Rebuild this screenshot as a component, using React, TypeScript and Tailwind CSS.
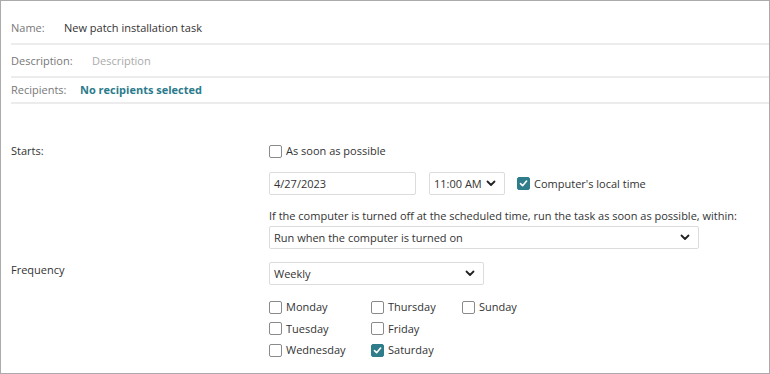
import { useState } from "react";

const teal = "bg-[#2f7d8a] border-[#2f7d8a]";

function Chevron() {
  return (
    <svg width="10" height="7" viewBox="0 0 10 7" className="shrink-0">
      <path d="M1.5 1.5 L5 5 L8.5 1.5" fill="none" stroke="#222" strokeWidth="1.8" strokeLinecap="round" strokeLinejoin="round" />
    </svg>
  );
}

function Box({ checked }: { checked: boolean }) {
  return (
    <span
      className={`flex h-[13px] w-[13px] shrink-0 items-center justify-center rounded-[2px] border ${
        checked ? teal : "border-[#8a8a8a] bg-white"
      }`}
    >
      {checked && (
        <svg width="9" height="9" viewBox="0 0 9 9">
          <path d="M1.5 4.6 L3.6 6.7 L7.6 2" fill="none" stroke="#fff" strokeWidth="1.6" strokeLinecap="round" strokeLinejoin="round" />
        </svg>
      )}
    </span>
  );
}

function Check({ label, initial = false }: { label: string; initial?: boolean }) {
  const [checked, setChecked] = useState(initial);
  return (
    <label
      className="flex h-[18px] cursor-pointer items-center gap-[4px] text-[#333]"
      onClick={() => setChecked((c) => !c)}
    >
      <Box checked={checked} />
      <span>{label}</span>
    </label>
  );
}

function Select({ value, className }: { value: string; className: string }) {
  return (
    <div
      className={`flex items-center justify-between rounded-[2px] border border-[#dcdcdc] bg-white pl-[4px] pr-[8px] text-[#333] ${className}`}
    >
      <span className="whitespace-nowrap">{value}</span>
      <Chevron />
    </div>
  );
}

export default function App() {
  const days: [string, boolean][] = [
    ["Monday", false],
    ["Thursday", false],
    ["Sunday", false],
    ["Tuesday", false],
    ["Friday", false],
    ["", false],
    ["Wednesday", false],
    ["Saturday", true],
  ];

  return (
    <div
      className="h-[374px] w-[770px] overflow-hidden border border-[#ababab] bg-white text-[11px] leading-[16px]"
      style={{ fontFamily: '"Open Sans", "Noto Sans", sans-serif' }}
    >
      <div className="pl-[10px]">
        <div className="flex h-[44px] items-center border-b-2 border-[#ececec] pt-[12px]">
          <span className="w-[53px] text-[#777]">Name:</span>
          <span className="text-[#333]">New patch installation task</span>
        </div>
        <div className="flex h-[33px] items-center border-b-2 border-[#ececec]">
          <span className="w-[81px] text-[#777]">Description:</span>
          <span className="text-[#aaa]">Description</span>
        </div>
        <div className="flex h-[26px] items-center border-b-2 border-[#ececec]">
          <span className="w-[69px] text-[#777]">Recipients:</span>
          <span className="font-bold text-[#2b7b8c]">No recipients selected</span>
        </div>
      </div>

      <div className="pl-[10px] pt-[38px]">
        <div className="flex">
          <div className="w-[258px] shrink-0 pt-[1px] text-[#333]">Starts:</div>
          <div className="flex flex-col">
            <Check label="As soon as possible" />
            <div className="mt-[12px] flex h-[23px] items-center">
              <div className="flex h-[23px] w-[147px] items-center rounded-[2px] border border-[#dcdcdc] pl-[4px] text-[#333]">
                4/27/2023
              </div>
              <Select value="11:00 AM" className="ml-[13px] h-[23px] w-[76px]" />
              <div className="ml-[12px]">
                <Check label="Computer's local time" initial />
              </div>
            </div>
            <div className="mt-[13px] whitespace-nowrap text-[#333]">
              If the computer is turned off at the scheduled time, run the task as soon as possible, within:
            </div>
            <Select value="Run when the computer is turned on" className="mt-[2px] h-[23px] w-[430px]" />
          </div>
        </div>

        <div className="mt-[13px] flex">
          <div className="w-[258px] shrink-0 text-[#333]">Frequency</div>
          <div className="flex flex-col">
            <Select value="Weekly" className="h-[23px] w-[215px]" />
            <div className="mt-[13px] grid grid-cols-[102px_91px_auto] gap-y-[3.5px]">
              {days.map(([d, c], i) =>
                d ? <Check key={d} label={d} initial={c} /> : <span key={i} />
              )}
            </div>
          </div>
        </div>
      </div>
    </div>
  );
}
